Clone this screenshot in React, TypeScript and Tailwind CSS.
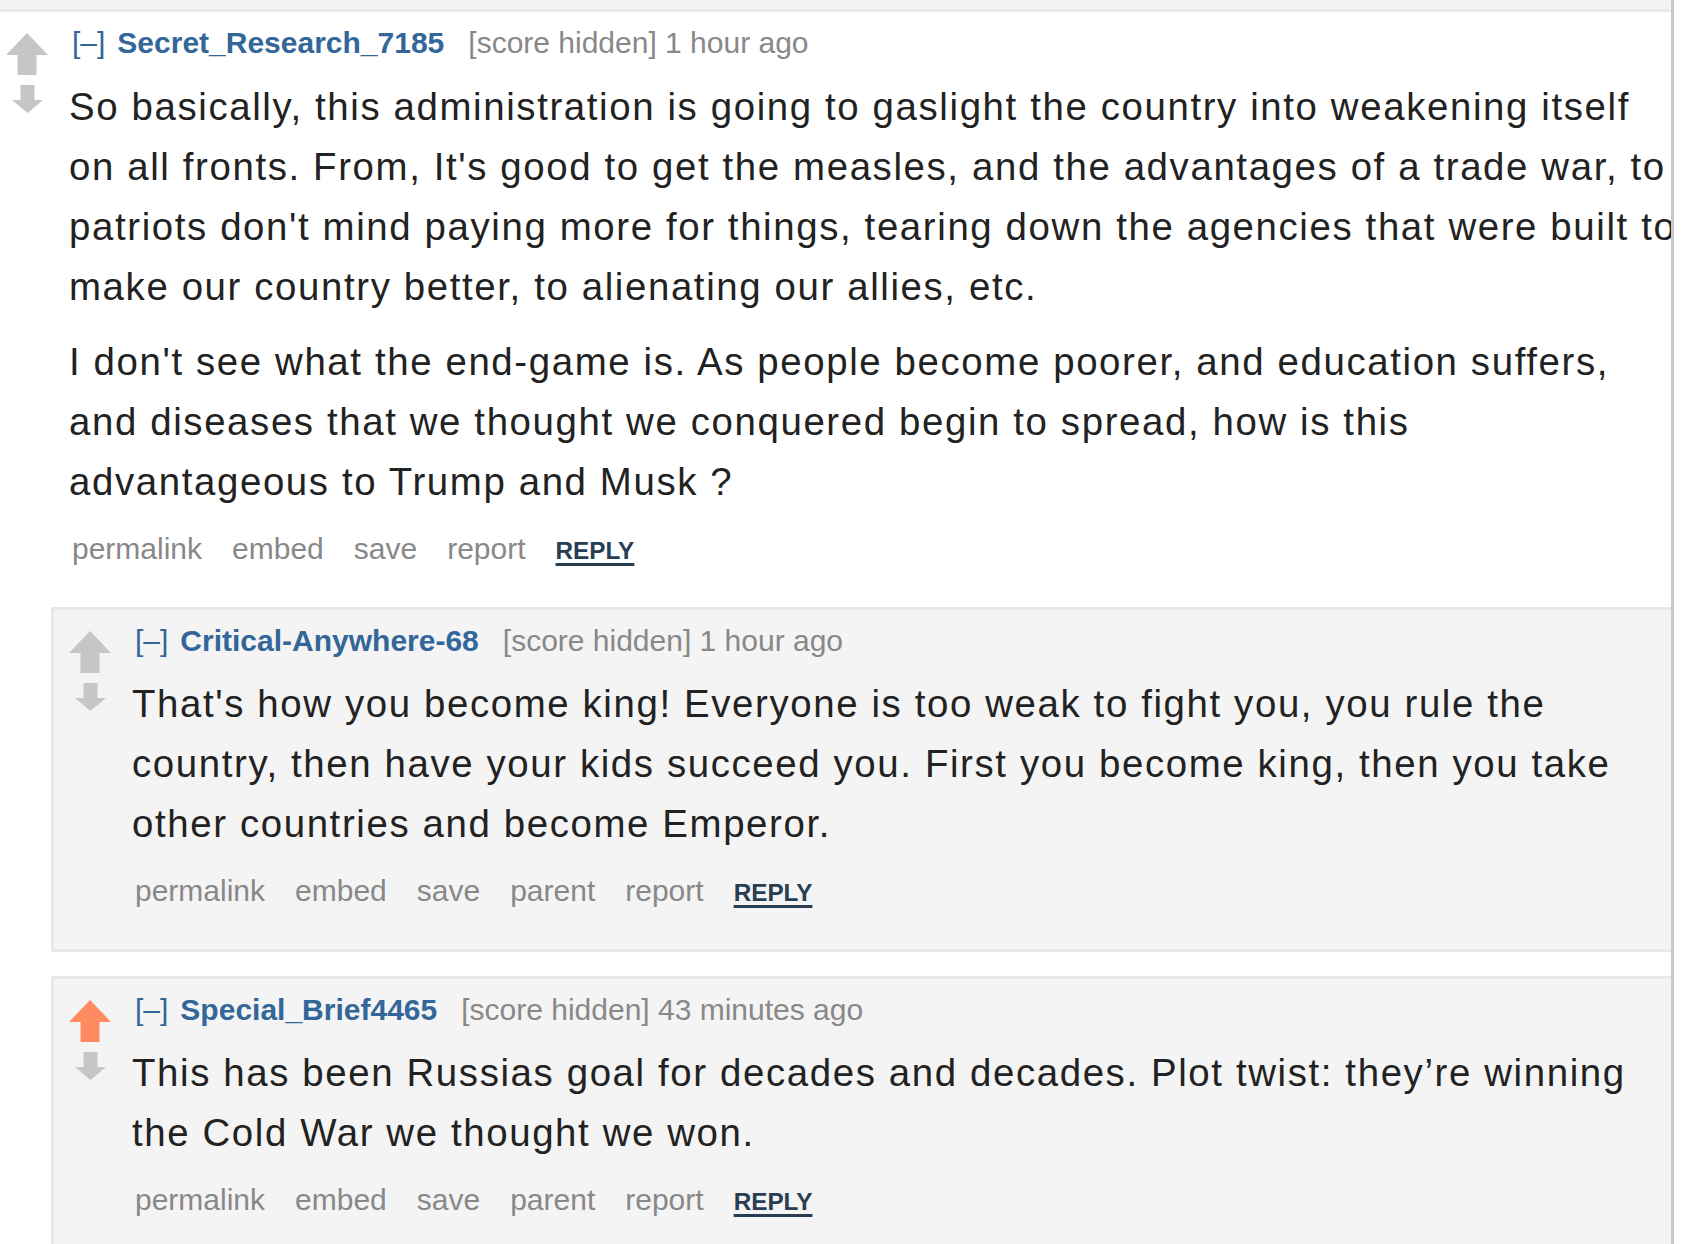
import React from 'react';

type Reply = {
  author: string;
  time: string;
  body: string[];
  upvoted?: boolean;
};

const replies: Reply[] = [
  {
    author: 'Critical-Anywhere-68',
    time: '1 hour ago',
    body: [
      "That's how you become king! Everyone is too weak to fight you, you rule the country, then have your kids succeed you. First you become king, then you take other countries and become Emperor.",
    ],
  },
  {
    author: 'Special_Brief4465',
    time: '43 minutes ago',
    upvoted: true,
    body: ['This has been Russias goal for decades and decades. Plot twist: they\u2019re winning the Cold War we thought we won.'],
  },
];

function Arrows({ upvoted = false }: { upvoted?: boolean }) {
  return (
    <div className="w-[42px] shrink-0 pt-[8px] flex flex-col items-center">
      <svg width="42" height="42" viewBox="0 0 42 42">
        <polygon
          points="21,0 42,22 30.5,22 30.5,42 11.5,42 11.5,22 0,22"
          fill={upvoted ? '#ff8b60' : '#c6c6c6'}
        />
      </svg>
      <svg width="31" height="28" viewBox="0 0 31 28" className="mt-[10px]">
        <polygon points="8.5,0 22.5,0 22.5,15 31,15 15.5,28 0,15 8.5,15" fill="#c6c6c6" />
      </svg>
    </div>
  );
}

function Tagline({ author, time }: { author: string; time: string }) {
  return (
    <div className="h-[36px] pl-[3px] leading-[36px] text-[30px] whitespace-nowrap">
      <span className="text-[#369]">[–]</span>
      <span className="ml-[12px] font-bold text-[#369]">{author}</span>
      <span className="ml-[24px] text-[#888]">[score hidden] {time}</span>
    </div>
  );
}

function Buttons({ parent = false }: { parent?: boolean }) {
  const items = parent
    ? ['permalink', 'embed', 'save', 'parent', 'report']
    : ['permalink', 'embed', 'save', 'report'];
  return (
    <div className="h-[36px] flex items-baseline gap-[30px] pl-[3px] leading-[36px] whitespace-nowrap">
      {items.map((item) => (
        <span key={item} className="text-[30px] text-[#888]">
          {item}
        </span>
      ))}
      <span className="text-[24.3px] font-bold text-[#283e52] underline decoration-[3px] underline-offset-[4px]">
        REPLY
      </span>
    </div>
  );
}

function Body({ paragraphs }: { paragraphs: string[] }) {
  return (
    <div className="text-[38.4px] leading-[60px] tracking-[1.62px] text-[#222]">
      {paragraphs.map((p, i) => (
        <p key={i} className={i > 0 ? 'mt-[15px]' : ''}>
          {p}
        </p>
      ))}
    </div>
  );
}

export default function App() {
  return (
    <div className="w-[1696px] h-[1244px] overflow-hidden bg-white flex font-['Liberation_Sans',Arial,sans-serif]">
      <div className="w-[1671px] shrink-0 flex flex-col">
        <div className="h-[12px] shrink-0 bg-[#f4f4f4] border-b-[3px] border-[#e8e8e8]" />

        {/* top-level comment */}
        <div className="flex shrink-0 pl-[6px] pt-[13px]">
          <Arrows />
          <div className="ml-[21px] flex-1 min-w-0">
            <Tagline author="Secret_Research_7185" time="1 hour ago" />
            <div className="mt-[16px] -mr-[6px]">
              <Body
                paragraphs={[
                  "So basically, this administration is going to gaslight the country into weakening itself on all fronts. From, It's good to get the measles, and the advantages of a trade war, to patriots don't mind paying more for things, tearing down the agencies that were built to make our country better, to alienating our allies, etc.",
                  "I don't see what the end-game is. As people become poorer, and education suffers, and diseases that we thought we conquered begin to spread, how is this advantageous to Trump and Musk ?",
                ]}
              />
            </div>
            <div className="mt-[19px]">
              <Buttons />
            </div>
          </div>
        </div>

        {/* replies */}
        <div className="ml-[51px] mt-[40px] flex shrink-0 flex-col gap-[24px]">
          {replies.map((r) => (
            <div
              key={r.author}
              className="flex shrink-0 bg-[#f4f4f4] border-l-[3px] border-y-[3px] border-[#e8e8e8] pl-[15px] pt-[13px] pb-[40px]"
            >
              <Arrows upvoted={r.upvoted} />
              <div className="ml-[21px] flex-1 min-w-0">
                <Tagline author={r.author} time={r.time} />
                <div className="mt-[15px]">
                  <Body paragraphs={r.body} />
                </div>
                <div className="mt-[19px]">
                  <Buttons parent />
                </div>
              </div>
            </div>
          ))}
        </div>
      </div>
      <div className="w-[3px] shrink-0 bg-[#c8c8c8]" />
    </div>
  );
}
